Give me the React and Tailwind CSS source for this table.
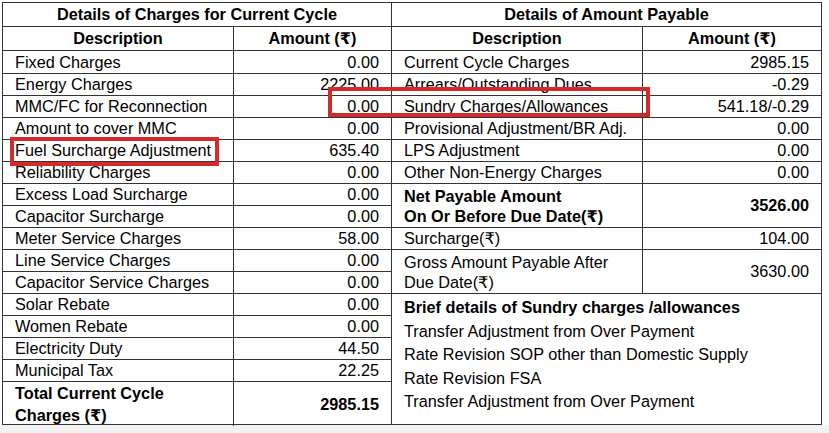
import React from "react";

const leftRows = [
  ["Fixed Charges", "0.00"],
  ["Energy Charges", "2225.00"],
  ["MMC/FC for Reconnection", "0.00"],
  ["Amount to cover MMC", "0.00"],
  ["Fuel Surcharge Adjustment", "635.40"],
  ["Reliability Charges", "0.00"],
  ["Excess Load Surcharge", "0.00"],
  ["Capacitor Surcharge", "0.00"],
  ["Meter Service Charges", "58.00"],
  ["Line Service Charges", "0.00"],
  ["Capacitor Service Charges", "0.00"],
  ["Solar Rebate", "0.00"],
  ["Women Rebate", "0.00"],
  ["Electricity Duty", "44.50"],
  ["Municipal Tax", "22.25"],
];

const rightRows = [
  ["Current Cycle Charges", "2985.15"],
  ["Arrears/Outstanding Dues", "-0.29"],
  ["Sundry Charges/Allowances", "541.18/-0.29"],
  ["Provisional Adjustment/BR Adj.", "0.00"],
  ["LPS Adjustment", "0.00"],
  ["Other Non-Energy Charges", "0.00"],
];

const sundry = [
  "Transfer Adjustment from Over Payment",
  "Rate Revision SOP other than Domestic Supply",
  "Rate Revision FSA",
  "Transfer Adjustment from Over Payment",
];

function Row({ desc, amount, descW, h = "h-[22px]", bold }) {
  return (
    <div className={`flex ${h} border-b border-[#333]`}>
      <div className={`${descW} shrink-0 border-r border-[#333] pl-3 flex items-center ${bold ? "font-bold" : ""}`}>
        {desc}
      </div>
      <div className={`flex-1 pr-3 flex items-center justify-end ${bold ? "font-bold" : ""}`}>
        {amount}
      </div>
    </div>
  );
}

function HeaderRows({ title, descW }) {
  return (
    <>
      <div className="h-[24px] border-b border-[#333] flex items-center justify-center font-bold">
        {title}
      </div>
      <div className="flex h-[24px] border-b border-[#333] font-bold">
        <div className={`${descW} shrink-0 border-r border-[#333] flex items-center justify-center`}>
          Description
        </div>
        <div className="flex-1 flex items-center justify-center">Amount (₹)</div>
      </div>
    </>
  );
}

export default function App() {
  return (
    <div className="w-[829px] h-[433px] bg-white text-black text-[16.25px] font-['Liberation_Sans','DejaVu_Sans',Arial,sans-serif] relative overflow-hidden">
      <div className="pt-[2px] pl-[2px]">
        <div className="flex w-[820px] h-[423px] border border-[#333]">
          {/* current cycle charges */}
          <div className="w-[389px] border-r border-[#333] flex flex-col">
            <HeaderRows title="Details of Charges for Current Cycle" descW="w-[231px]" />
            {leftRows.map(([d, a], i) => (
              <Row key={i} desc={d} amount={a} descW="w-[231px]" h={i === 0 ? "h-[23px]" : "h-[22px]"} />
            ))}
            <div className="flex flex-1 font-bold">
              <div className="w-[231px] shrink-0 border-r border-[#333] pl-3 flex flex-col justify-center leading-[22px]">
                <span>Total Current Cycle</span>
                <span>Charges (₹)</span>
              </div>
              <div className="flex-1 pr-3 flex items-center justify-end">2985.15</div>
            </div>
          </div>

          {/* amount payable */}
          <div className="flex-1 flex flex-col">
            <HeaderRows title="Details of Amount Payable" descW="w-[251px]" />
            {rightRows.map(([d, a], i) => (
              <Row key={i} desc={d} amount={a} descW="w-[251px]" h={i === 0 ? "h-[23px]" : "h-[22px]"} />
            ))}
            <div className="flex h-[44px] border-b border-[#333] font-bold">
              <div className="w-[251px] shrink-0 border-r border-[#333] pl-3 flex flex-col justify-center leading-[20px]">
                <span>Net Payable Amount</span>
                <span>On Or Before Due Date(₹)</span>
              </div>
              <div className="flex-1 pr-3 flex items-center justify-end">3526.00</div>
            </div>
            <Row desc="Surcharge(₹)" amount="104.00" descW="w-[251px]" />
            <div className="flex h-[44px] border-b border-[#333]">
              <div className="w-[251px] shrink-0 border-r border-[#333] pl-3 flex flex-col justify-center leading-[20px]">
                <span>Gross Amount Payable After</span>
                <span>Due Date(₹)</span>
              </div>
              <div className="flex-1 pr-3 flex items-center justify-end">3630.00</div>
            </div>
            <div className="flex-1 pl-3 pt-[2px] leading-[23.5px]">
              <div className="font-bold">Brief details of Sundry charges /allowances</div>
              {sundry.map((s, i) => (
                <div key={i}>{s}</div>
              ))}
            </div>
          </div>
        </div>
      </div>
      <div className="h-[8px] bg-[#f2f2f2]" />

      {/* highlight marks */}
      <div className="absolute left-[328px] top-[87px] w-[322px] h-[30px] border-[4px] border-[#d42a2a]" />
      <div className="absolute left-[10px] top-[137px] w-[209px] h-[29px] border-[4px] border-[#d42a2a]" />
    </div>
  );
}
